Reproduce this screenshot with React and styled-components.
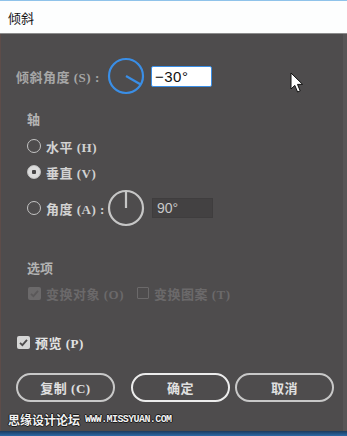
import React from 'react'
import styled, { createGlobalStyle } from 'styled-components'

const GlobalStyle = createGlobalStyle`
  html, body {
    margin: 0;
    padding: 0;
    background: #4e4c4d;
  }
`

const CJK = `"Liberation Serif", "Noto Sans CJK SC", serif`

function Dial({ angle, color }) {
  const r = 17
  const rad = (angle * Math.PI) / 180
  const x2 = 19 + r * Math.cos(rad)
  const y2 = 19 - r * Math.sin(rad)
  return (
    <DialBox width="38" height="38" viewBox="0 0 38 38">
      <circle cx="19" cy="19" r={r} fill="none" stroke={color} strokeWidth="2.2" />
      <line x1="19" y1="19" x2={x2} y2={y2} stroke={color} strokeWidth="2.2" />
    </DialBox>
  )
}

function Check({ $disabled }) {
  return (
    <CheckBox $disabled={$disabled}>
      <svg width="13" height="13" viewBox="0 0 13 13">
        <path d="M3 6.8 L5.4 9.2 L10 3.8" fill="none" stroke={$disabled ? '#5a5859' : '#4e4c4d'} strokeWidth="1.8" />
      </svg>
    </CheckBox>
  )
}

function App() {
  return (
    <>
      <GlobalStyle />
      <Window>
        <TopLine />
        <TitleBar>倾斜</TitleBar>
        <Body>
          <ShearRow>
            <FieldLabel>倾斜角度 (S) :</FieldLabel>
            <Dial angle={-30} color="#3a8ee6" />
            <ValueInput readOnly value="−30°" />
          </ShearRow>

          <Section>
            <SectionTitle $top={18}>轴</SectionTitle>
            <OptionRow $top={8} $height={20}>
              <Radio />
              <OptionLabel>水平 (H)</OptionLabel>
            </OptionRow>
            <OptionRow $top={6} $height={20}>
              <Radio $checked />
              <OptionLabel>垂直 (V)</OptionLabel>
            </OptionRow>
            <OptionRow $top={8} $height={36}>
              <Radio />
              <OptionLabel $trail={-3}>角度 (A) :</OptionLabel>
              <Dial angle={90} color="#c6c6c6" />
              <DarkInput readOnly value="90°" />
            </OptionRow>

            <SectionTitle $top={35}>选项</SectionTitle>
            <OptionRow $top={8} $height={16}>
              <Check $disabled />
              <OptionLabel $disabled $trail={8}>变换对象 (O)</OptionLabel>
              <EmptyBox />
              <OptionLabel $disabled>变换图案 (T)</OptionLabel>
            </OptionRow>
          </Section>

          <OptionRow $top={33} $height={16}>
            <Check />
            <OptionLabel $bright>预览 (P)</OptionLabel>
          </OptionRow>

          <ButtonRow>
            <PillButton>复制 (C)</PillButton>
            <PillButton $primary $offset={16}>确定</PillButton>
            <PillButton $offset={5}>取消</PillButton>
          </ButtonRow>

          <Watermark>
            <WatermarkCn>思缘设计论坛</WatermarkCn>
            <WatermarkUrl>WWW.MISSYUAN.COM</WatermarkUrl>
          </Watermark>
        </Body>
        <BottomBar />

        <Cursor width="14" height="22" viewBox="0 0 14 22">
          <path d="M1 1 L1 17 L4.8 13.4 L7.6 20 L10.2 18.9 L7.5 12.4 L12.6 12.4 Z" fill="#fff" stroke="#111" strokeWidth="1" strokeLinejoin="round" />
        </Cursor>
      </Window>
    </>
  )
}

export default App

const Window = styled.div`
  position: relative;
  width: 347px;
  height: 436px;
  overflow: hidden;
  display: flex;
  flex-direction: column;
`
const TopLine = styled.div`
  height: 1px;
  background: #8fc3ea;
`
const TitleBar = styled.div`
  height: 33px;
  box-sizing: border-box;
  background: #fdfefe;
  border-bottom: 1px solid #8c8c8c;
  display: flex;
  align-items: center;
  padding-left: 8px;
  font-family: "Noto Sans CJK SC", sans-serif;
  font-size: 13px;
  color: #151515;
`
const Body = styled.div`
  flex: 1;
  background: #4e4c4d;
  border-left: 1px solid #5d4c49;
  border-right: 4px solid #575556;
  display: flex;
  flex-direction: column;
  padding-left: 15px;
  font-family: ${CJK};
  font-size: 13px;
  font-weight: bold;
`
const BottomBar = styled.div`
  height: 5px;
  background: linear-gradient(#1b3a5e, #2b6aa6);
`
const ShearRow = styled.div`
  display: flex;
  align-items: center;
  height: 36px;
  margin-top: 24px;
`
const FieldLabel = styled.span`
  width: 91px;
  color: #a6a6a6;
  white-space: nowrap;
  letter-spacing: 0.5px;
`
const DialBox = styled.svg`
  flex: none;
  display: block;
`
const ValueInput = styled.input`
  width: 61px;
  height: 21px;
  box-sizing: border-box;
  margin-left: 6px;
  padding: 0 0 0 3px;
  background: #fff;
  border: 1px solid #3a8ee6;
  border-radius: 2px;
  outline: none;
  font-family: "Liberation Sans", sans-serif;
  font-size: 15px;
  letter-spacing: 0.5px;
  color: #111;
`
const DarkInput = styled.input`
  width: 61px;
  height: 20px;
  box-sizing: border-box;
  margin-left: 2px;
  padding: 0 0 0 4px;
  background: #434142;
  border: 1px solid #3f3d3e;
  outline: none;
  font-family: "Liberation Sans", sans-serif;
  font-size: 14px;
  color: #c8c8c8;
`
const Section = styled.div`
  display: flex;
  flex-direction: column;
  padding-left: 11px;
`
const SectionTitle = styled.div`
  margin-top: ${p => p.$top}px;
  line-height: 16px;
  color: #b3b3b3;
`
const OptionRow = styled.div`
  display: flex;
  align-items: center;
  gap: 5px;
  height: ${p => p.$height}px;
  margin-top: ${p => p.$top}px;
`
const Radio = styled.span`
  flex: none;
  width: 14px;
  height: 14px;
  box-sizing: border-box;
  border-radius: 50%;
  border: 1.5px solid #c4c4c4;
  background: ${p => (p.$checked ? 'radial-gradient(circle, #474546 0 2px, #dcdcdc 2.5px)' : 'transparent')};
`
const OptionLabel = styled.span`
  white-space: nowrap;
  letter-spacing: 0.5px;
  color: ${p => (p.$disabled ? '#6b696a' : p.$bright ? '#e2e2e2' : '#d2d2d2')};
  margin-right: ${p => p.$trail || 0}px;
`
const CheckBox = styled.span`
  flex: none;
  display: flex;
  width: 13px;
  height: 13px;
  border-radius: 2px;
  margin-left: 1px;
  background: ${p => (p.$disabled ? '#6b696a' : '#d6d6d6')};
`
const EmptyBox = styled.span`
  flex: none;
  width: 12px;
  height: 12px;
  box-sizing: border-box;
  border: 1.5px solid #6b696a;
  border-radius: 1px;
`
const ButtonRow = styled.div`
  display: flex;
  margin-top: 23px;
`
const PillButton = styled.button`
  width: 99px;
  height: 29px;
  box-sizing: border-box;
  margin-left: ${p => p.$offset || 0}px;
  padding: 0;
  border-radius: 15px;
  border: ${p => (p.$primary ? '2.5px solid #ececec' : '2px solid #c8c8c8')};
  background: transparent;
  color: #e0e0e0;
  font-family: ${CJK};
  font-size: 13px;
  font-weight: bold;
  letter-spacing: 0.5px;
`
const Watermark = styled.div`
  display: flex;
  align-items: center;
  gap: 5px;
  height: 14px;
  margin-top: 10px;
  margin-left: -8px;
  color: #f2f2f2;
  text-shadow: 1px 0 0 #1a1a1a, -1px 0 0 #1a1a1a, 0 1px 0 #1a1a1a, 0 -1px 0 #1a1a1a;
`
const WatermarkCn = styled.span`
  font-family: "Noto Sans CJK SC", sans-serif;
  font-size: 12px;
  font-weight: bold;
`
const WatermarkUrl = styled.span`
  font-family: "Liberation Mono", monospace;
  font-size: 10px;
  font-weight: bold;
  letter-spacing: -0.6px;
`
const Cursor = styled.svg`
  position: absolute;
  left: 290px;
  top: 72px;
`
